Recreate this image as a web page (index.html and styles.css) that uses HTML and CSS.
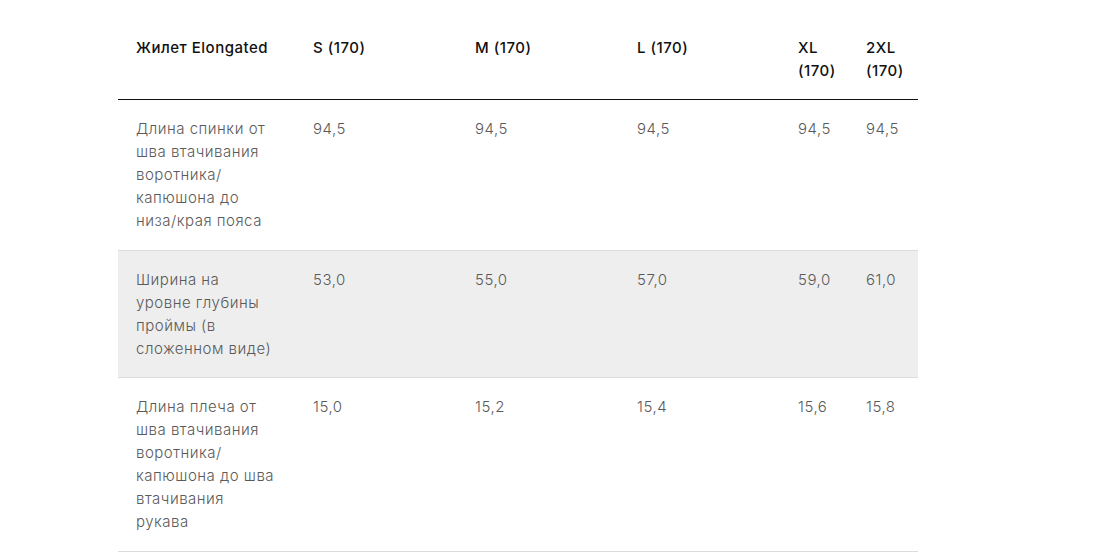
FILE: index.html
```html
<!DOCTYPE html>
<html lang="ru">
<head>
<meta charset="utf-8">
<link rel="stylesheet" href="styles.css">
</head>
<body>
<div class="wrap">
<table class="sizes">
  <colgroup>
    <col class="c1"><col class="c2"><col class="c3"><col class="c4"><col class="c5"><col class="c6">
  </colgroup>
  <thead>
    <tr>
      <th>Жилет Elongated</th>
      <th>S (170)</th>
      <th>M (170)</th>
      <th>L (170)</th>
      <th>XL (170)</th>
      <th>2XL (170)</th>
    </tr>
  </thead>
  <tbody>
    <tr>
      <td>Длина спинки от шва втачивания воротника/ капюшона до низа/края пояса</td>
      <td>94,5</td><td>94,5</td><td>94,5</td><td>94,5</td><td>94,5</td>
    </tr>
    <tr class="alt">
      <td>Ширина на уровне глубины проймы (в сложенном виде)</td>
      <td>53,0</td><td>55,0</td><td>57,0</td><td>59,0</td><td>61,0</td>
    </tr>
    <tr>
      <td>Длина плеча от шва втачивания воротника/ капюшона до шва втачивания рукава</td>
      <td>15,0</td><td>15,2</td><td>15,4</td><td>15,6</td><td>15,8</td>
    </tr>
  </tbody>
</table>
</div>
</body>
</html>
```
FILE: styles.css
```css
html, body {
  margin: 0;
  padding: 0;
  background: #fff;
}
body {
  font-family: "Inter", "DejaVu Sans", sans-serif;
  font-size: 15px;
  letter-spacing: 0.5px;
  line-height: 23px;
}
.wrap {
  padding: 19px 0 0 118px;
}
.sizes {
  width: 800px;
  table-layout: fixed;
  border-collapse: collapse;
}
.c1 { width: 177px; }
.c2 { width: 162px; }
.c3 { width: 162px; }
.c4 { width: 161px; }
.c5 { width: 68px; }
.c6 { width: 70px; }
.sizes th,
.sizes td {
  text-align: left;
  vertical-align: top;
  padding: 17px 18px 17px 18px;
}
.sizes td {
  padding-bottom: 17.6px;
}
.sizes th:first-child,
.sizes td:first-child {
  padding-right: 16px;
}
.sizes th {
  font-weight: 500;
  color: #111;
  border-bottom: 1px solid #111;
}
.sizes td {
  font-weight: 300;
  color: #5a5a5a;
  border-bottom: 1px solid #dcdcdc;
}
.sizes tr.alt td {
  background: #eeeeee;
}
```
